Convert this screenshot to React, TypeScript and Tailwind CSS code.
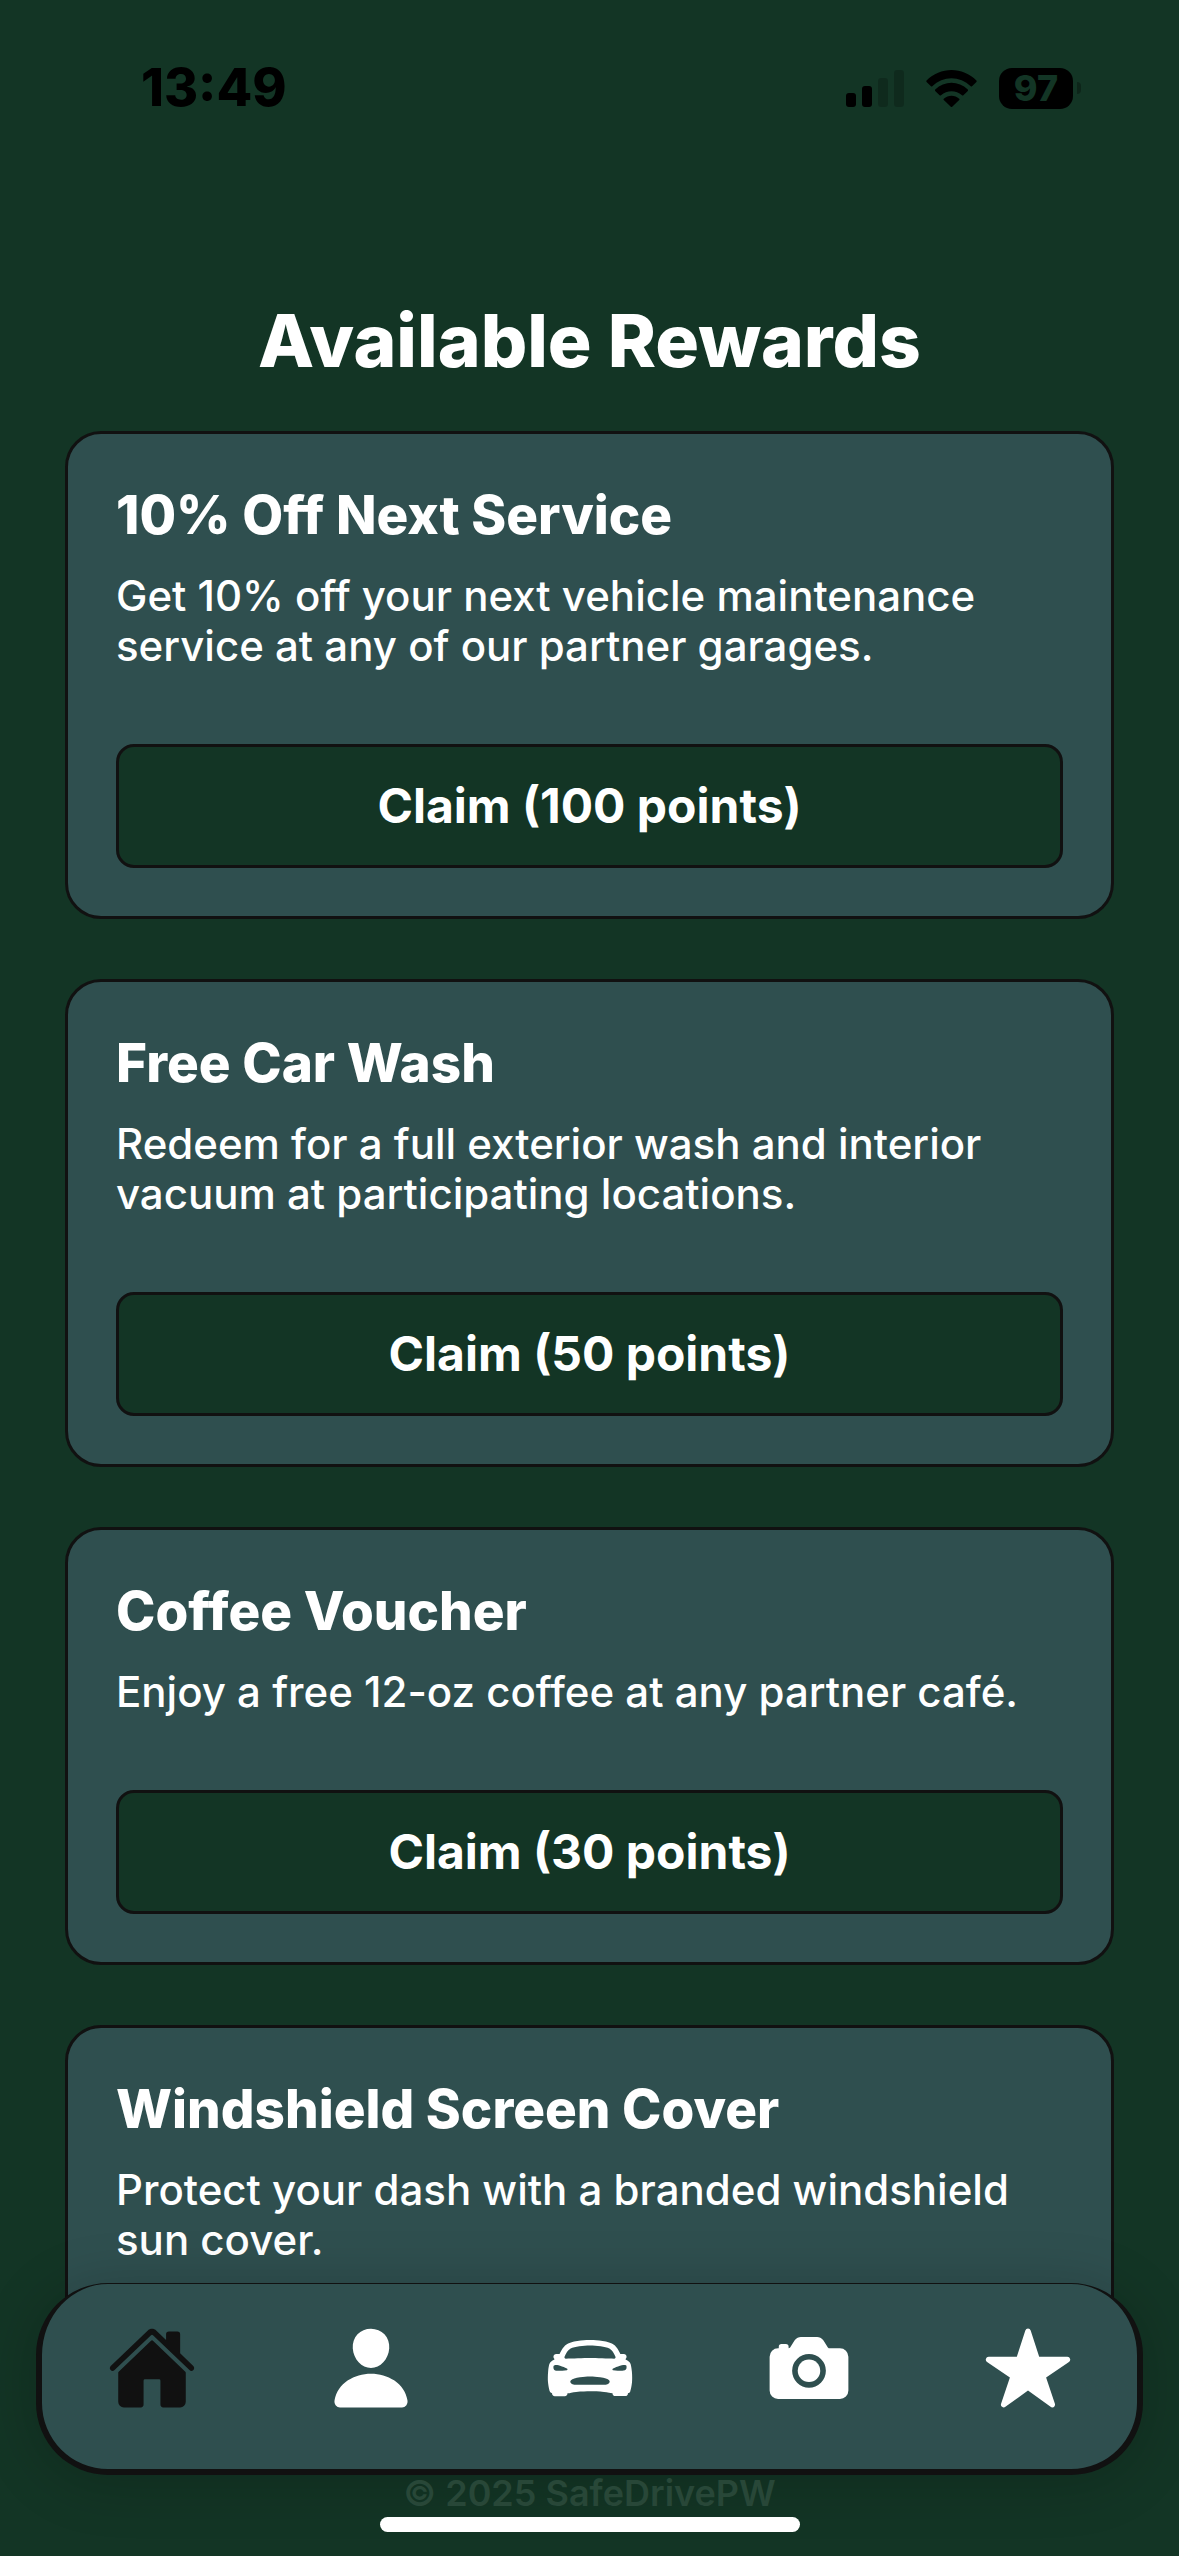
import type { ReactNode } from "react";
import { IoCamera, IoCarSport, IoHome, IoPerson, IoStar } from "react-icons/io5";

type Reward = { title: string; description: string; points?: number };

const rewards: Reward[] = [
  { title: "10% Off Next Service", description: "Get 10% off your next vehicle maintenance service at any of our partner garages.", points: 100 },
  { title: "Free Car Wash", description: "Redeem for a full exterior wash and interior vacuum at participating locations.", points: 50 },
  { title: "Coffee Voucher", description: "Enjoy a free 12-oz coffee at any partner café.", points: 30 },
  { title: "Windshield Screen Cover", description: "Protect your dash with a branded windshield sun cover." },
];

function StatusBar() {
  return (
    <header className="flex h-[177px] shrink-0 items-start justify-between pt-[60px] pr-[98px] pl-[141px] text-black">
      <time className="text-[52px] leading-[56px] font-extrabold">13:49</time>
      <div className="flex h-[56px] items-center gap-[22px]">
        <svg className="h-[37px] w-[58px]" viewBox="0 0 58 37" fill="currentColor" aria-label="Cellular signal">
          <rect x="0" y="23" width="10" height="14" rx="3" />
          <rect x="16" y="16" width="10" height="21" rx="3" />
          <rect x="32" y="8" width="10" height="29" rx="3" opacity=".2" />
          <rect x="48" y="0" width="10" height="37" rx="3" opacity=".2" />
        </svg>
        <svg className="h-[37px] w-[51px]" viewBox="0 0 51 37" fill="currentColor" aria-label="Wi-Fi">
          <path d="M.6 10.6C14-3.500 37-3.500 50.400 10.600Q51 11.300 50.400 12L46 16.300Q45.400 16.900 44.700 16.300C34 5.500 17 5.500 6.300 16.300Q5.600 16.900 5 16.300L.6 12Q0 11.300 .6 10.600Z" />
          <path d="M9.200 19.600C18.500 10.500 32.500 10.500 41.800 19.600Q42.400 20.300 41.800 21L37.400 25.300Q36.700 25.900 36 25.300C30 19.900 21 19.900 15 25.300Q14.300 25.900 13.600 25.300L9.200 21Q8.600 20.300 9.200 19.600Z" />
          <path d="M17.800 28.800C22.200 24.800 28.800 24.800 33.200 28.800Q33.800 29.500 33.200 30.100L26.200 36.700Q25.500 37.300 24.800 36.700L17.800 30.100Q17.200 29.500 17.800 28.800Z" />
        </svg>
        <div className="flex items-center gap-1">
          <span className="flex h-[41px] w-[74px] items-center justify-center rounded-[13px] bg-black text-[36px] font-extrabold text-[#133525]">97</span>
          <span className="h-3 w-1 rounded-r-full bg-black/30" />
        </div>
      </div>
    </header>
  );
}

function RewardCard({ reward }: { reward: Reward }) {
  return (
    <article className="shrink-0 rounded-[36px] border-3 border-[#111] bg-[#2f4f4f] p-12 last:grow">
      <h2 className="text-[53px] leading-[66px] font-extrabold">{reward.title}</h2>
      <p className="mt-[23px] text-[42px] leading-[50px] font-medium">{reward.description}</p>
      {reward.points !== undefined && (
        <button type="button" className="mt-[73px] flex h-[124px] w-full items-center justify-center rounded-[18px] border-3 border-[#111] bg-[#133525] text-[48px] font-bold">
          Claim ({reward.points} points)
        </button>
      )}
    </article>
  );
}

function Tab({ label, active, children }: { label: string; active?: boolean; children: ReactNode }) {
  return (
    <a
      href="#"
      aria-label={label}
      aria-current={active ? "page" : undefined}
      className={active ? "flex flex-1 justify-center text-[#111]" : "flex flex-1 justify-center text-white"}
    >
      {children}
    </a>
  );
}

export default function App() {
  return (
    <div className="flex h-screen flex-col overflow-hidden bg-[#133525] font-['Inter',sans-serif] text-white">
      <StatusBar />
      <main className="flex min-h-0 flex-1 flex-col overflow-hidden px-[65px] pt-[121px]">
        <h1 className="text-center text-[73px] leading-[86px] font-extrabold">Available Rewards</h1>
        <div className="mt-[47px] flex flex-1 flex-col gap-[60px]">
          {rewards.map((reward) => (
            <RewardCard key={reward.title} reward={reward} />
          ))}
        </div>
      </main>
      <div className="relative -mt-[72px] flex shrink-0 flex-col px-9">
        <nav className="flex h-[192px] rounded-[72px] border-6 border-t border-[#111] bg-[#2f4f4f] pt-[39px] shadow-[0_6px_60px_rgba(0,0,0,0.2)]">
          <Tab label="Home" active><IoHome size={90} /></Tab>
          <Tab label="Profile"><IoPerson size={90} /></Tab>
          <Tab label="Vehicle"><IoCarSport size={90} /></Tab>
          <Tab label="Camera"><IoCamera size={90} /></Tab>
          <Tab label="Rewards"><IoStar size={90} /></Tab>
        </nav>
        <footer className="flex h-[81px] flex-col items-center text-[36px] leading-9 font-semibold text-[#284738]">
          <p>© 2025 SafeDrivePW</p>
          <div className="mt-[6px] h-[15px] w-[420px] rounded-full bg-white" />
        </footer>
      </div>
    </div>
  );
}
